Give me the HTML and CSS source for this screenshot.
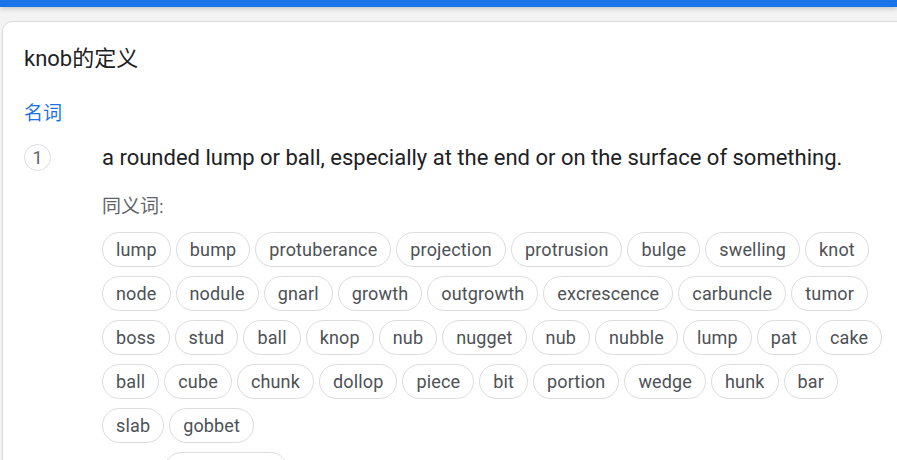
FILE: index.html
```html
<!DOCTYPE html>
<html lang="zh-CN">
<head>
<meta charset="utf-8">
<title>knob的定义</title>
<link rel="stylesheet" href="styles.css">
</head>
<body>
<div class="topbar"></div>
<main class="page">
  <section class="card">
    <h1 class="title">knob的定义</h1>
    <div class="pos">名词</div>
    <div class="sense">
      <div class="num">1</div>
      <div class="sense-body">
        <p class="def">a rounded lump or ball, especially at the end or on the surface of something.</p>
        <div class="syn-label">同义词:</div>
        <div class="chips">
          <span class="chip">lump</span>
          <span class="chip">bump</span>
          <span class="chip">protuberance</span>
          <span class="chip">projection</span>
          <span class="chip">protrusion</span>
          <span class="chip">bulge</span>
          <span class="chip">swelling</span>
          <span class="chip">knot</span>
          <span class="chip">node</span>
          <span class="chip">nodule</span>
          <span class="chip">gnarl</span>
          <span class="chip">growth</span>
          <span class="chip">outgrowth</span>
          <span class="chip">excrescence</span>
          <span class="chip">carbuncle</span>
          <span class="chip">tumor</span>
          <span class="chip">boss</span>
          <span class="chip">stud</span>
          <span class="chip">ball</span>
          <span class="chip">knop</span>
          <span class="chip">nub</span>
          <span class="chip">nugget</span>
          <span class="chip">nub</span>
          <span class="chip">nubble</span>
          <span class="chip">lump</span>
          <span class="chip">pat</span>
          <span class="chip">cake</span>
          <span class="chip">ball</span>
          <span class="chip">cube</span>
          <span class="chip">chunk</span>
          <span class="chip">dollop</span>
          <span class="chip">piece</span>
          <span class="chip">bit</span>
          <span class="chip">portion</span>
          <span class="chip">wedge</span>
          <span class="chip">hunk</span>
          <span class="chip">bar</span>
          <span class="chip">slab</span>
          <span class="chip">gobbet</span>
        </div>
        <div class="chips chips-next">
          <span class="chip chip-wide">excrescence</span>
        </div>
      </div>
    </div>
  </section>
</main>
</body>
</html>
```

FILE: styles.css
```css
html, body {
  margin: 0;
  padding: 0;
}
body {
  background: #f3f3f3;
  font-family: Roboto, "Noto Sans CJK SC", sans-serif;
  color: #202124;
  overflow: hidden;
  width: 897px;
  height: 460px;
}
.topbar {
  height: 7px;
  background: #1a73e8;
  box-shadow: 0 2px 5px rgba(0, 0, 0, 0.18);
  position: relative;
  z-index: 1;
}
.page {
  padding: 14px 0 0 2px;
}
.card {
  background: #fff;
  border: 1px solid #dadce0;
  border-right: none;
  border-radius: 10px 0 0 0;
  width: 930px;
  height: 460px;
  padding: 23px 0 0 21px;
  box-sizing: border-box;
}
.title {
  margin: 0;
  font-size: 22px;
  line-height: 28px;
  font-weight: 400;
  color: #202124;
}
.pos {
  margin-top: 29px;
  font-size: 19px;
  line-height: 24px;
  color: #1a73e8;
}
.sense {
  display: flex;
  margin-top: 18px;
}
.num {
  flex: none;
  width: 25px;
  height: 25px;
  border: 1px solid #dadce0;
  border-radius: 50%;
  font-size: 18px;
  line-height: 25px;
  text-align: center;
  color: #5f6368;
  margin-top: 0;
  margin-right: 51px;
}
.sense-body {
  flex: 1;
}
.def {
  margin: 0;
  font-size: 22px;
  line-height: 28px;
  color: #202124;
}
.syn-label {
  margin-top: 23px;
  font-size: 19px;
  line-height: 24px;
  color: #5f6368;
}
.chips {
  margin-top: 13px;
  display: flex;
  flex-wrap: wrap;
  gap: 9px 5px;
  width: 790px;
}
.chips-next {
  margin-top: 9px;
  padding-left: 62px;
}
.chip {
  border: 1px solid #dadce0;
  border-radius: 18px;
  padding: 6px 13px;
  font-size: 18px;
  line-height: 21px;
  letter-spacing: 0.15px;
  color: #4d5156;
  white-space: nowrap;
}
.chip-wide {
  padding: 6px 0;
  width: 122px;
  text-align: center;
}
```
